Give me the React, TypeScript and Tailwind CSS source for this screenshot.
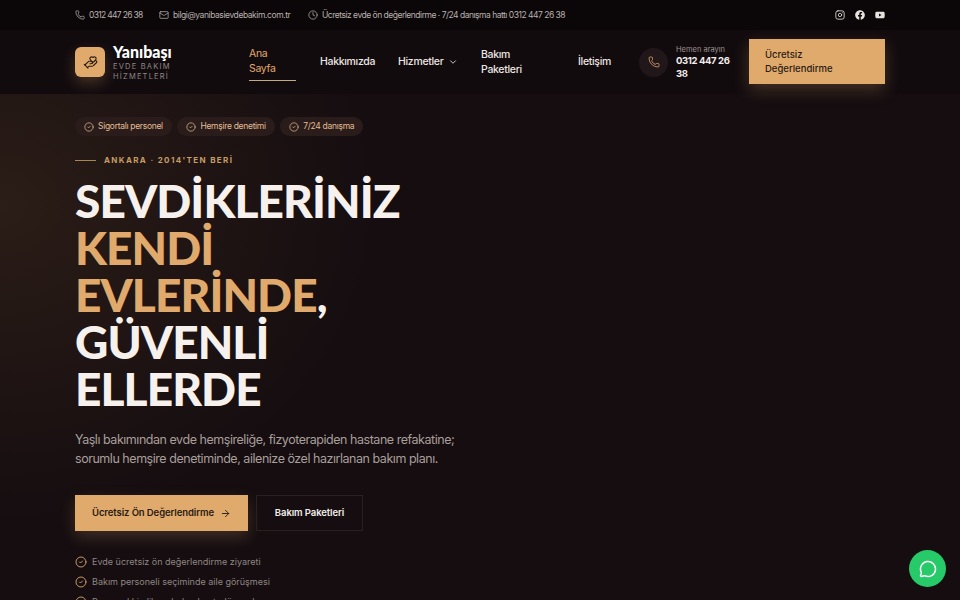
import { Phone, Mail, Clock, CircleCheck, ChevronDown, ArrowRight, MessageCircle, Instagram, HandHeart } from 'lucide-react'
import { FaFacebook, FaYoutube } from 'react-icons/fa'

const badges = ['Sigortalı personel', 'Hemşire denetimi', '7/24 danışma']
const checks = [
  'Evde ücretsiz ön değerlendirme ziyareti',
  'Bakım personeli seçiminde aile görüşmesi',
  'Personel kimlik ve belge kontrolü yapılır',
]

function TopBar() {
  return (
    <div className="h-[30px] bg-[#0b0709] px-[75px] flex items-center justify-between text-[8.5px] tracking-[-0.05em] text-[#b9b0ad]">
      <div className="flex items-center">
        <Phone size={10} className="mr-1" strokeWidth={1.75} />
        <span className="w-[54px] whitespace-nowrap tracking-[-0.08em]">0312 447 26 38</span>
        <Mail size={10} className="ml-4 mr-1" strokeWidth={1.75} />
        <span className="w-[119px] whitespace-nowrap">bilgi@yanibasievdebakim.com.tr</span>
        <Clock size={10} className="ml-4 mr-[4px]" strokeWidth={1.75} />
        <span className="whitespace-nowrap tracking-[-0.058em]">Ücretsiz evde ön değerlendirme · 7/24 danışma hattı 0312 447 26 38</span>
      </div>
      <div className="flex items-center gap-2.5 text-[#e8e2df]">
        <Instagram size={10} strokeWidth={2} />
        <FaFacebook size={10} />
        <FaYoutube size={10} />
      </div>
    </div>
  )
}

function Header() {
  return (
    <div className="h-[64px] bg-[#120b0e] px-[75px] flex items-center">
      <div className="w-[30px] h-[30px] rounded-md bg-[#e0aa6c] flex items-center justify-center shadow-[0_6px_14px_rgba(224,170,108,0.25)]">
        <HandHeart size={15} className="text-[#2a1a12]" strokeWidth={1.75} />
      </div>
      <div className="ml-2 w-[136px]">
        <div className="font-['Lato',sans-serif] font-black text-[16px] leading-[17px] text-white">Yanıbaşı</div>
        <div className="text-[7.5px] leading-[10px] tracking-[0.16em] text-[#8f8682] mt-0.5">
          EVDE BAKIM<br />HİZMETLERİ
        </div>
      </div>
      <nav className="flex items-center text-[10.5px] tracking-[-0.03em] font-medium text-[#ece6e3]">
        <div className="w-[47px] leading-[15px] text-[#e0aa6c] border-b-[1.5px] border-[#c0aa88] pb-1 pt-[2px] font-normal">Ana<br />Sayfa</div>
        <span className="ml-6 w-[54px] whitespace-nowrap">Hakkımızda</span>
        <span className="ml-6 flex items-center gap-[3px]">
          <span className="w-[47px] whitespace-nowrap">Hizmetler</span>
          <ChevronDown size={10} />
        </span>
        <span className="ml-[23px] w-[72px] leading-[15px]">Bakım<br />Paketleri</span>
        <span className="ml-[25px] w-[35px] whitespace-nowrap">İletişim</span>
      </nav>
      <div className="ml-[26px] w-[29px] h-[29px] rounded-full bg-[#21171a] flex items-center justify-center">
        <Phone size={12} className="text-[#e0aa6c]" strokeWidth={1.5} />
      </div>
      <div className="ml-2 w-[65px]">
        <div className="text-[7.5px] leading-[10px] text-[#9b918d]">Hemen arayın</div>
        <div className="text-[9.5px] leading-[13px] tracking-[-0.04em] font-bold text-[#f2edeb] -mt-px">0312 447 26 38</div>
      </div>
      <div className="ml-2 mb-px w-[136px] h-[45px] bg-[#e0aa6c] px-4 flex items-center text-[9.5px] leading-[13.5px] font-medium text-[#2a1a12] shadow-[0_6px_16px_rgba(224,170,108,0.25)]">
        Ücretsiz<br />Değerlendirme
      </div>
    </div>
  )
}

function Hero() {
  return (
    <div className="h-[506px] overflow-hidden pl-[75px] pt-[23px] bg-[radial-gradient(ellipse_380px_320px_at_0%_22%,#2b1d17_0%,#150d10_100%)]">
      <div className="flex gap-[5.5px]">
        {badges.map((b) => (
          <div key={b} className="h-[19px] rounded-full bg-[#2a1c1a] px-[9px] flex items-center gap-1 text-[8.5px] tracking-[-0.035em] text-[#e0bd92]">
            <CircleCheck size={10} strokeWidth={1.75} />
            {b}
          </div>
        ))}
      </div>
      <div className="mt-[18px] flex items-center gap-2 text-[8px] font-bold tracking-[0.17em] text-[#c79c66]">
        <div className="w-[21px] h-px bg-[#a98556]" />
        ANKARA · 2014'TEN BERİ
      </div>
      <h1 className="mt-[11px] font-['Lato',sans-serif] font-black text-[46px] leading-[47px] tracking-[-0.02em] text-[#f7f1ee]">
        SEVDİKLERİNİZ<br />
        <span className="text-[#e0aa6c]">KENDİ<br />EVLERİNDE</span>,<br />
        GÜVENLİ<br />ELLERDE
      </h1>
      <p className="mt-[18px] text-[12.5px] leading-[19px] tracking-[-0.037em] text-[#a89f9b]">
        Yaşlı bakımından evde hemşireliğe, fizyoterapiden hastane refakatine;<br />
        sorumlu hemşire denetiminde, ailenize özel hazırlanan bakım planı.
      </p>
      <div className="mt-[27px] flex gap-2">
        <div className="w-[173px] h-[36px] bg-[#e0aa6c] flex items-center justify-center gap-[6px] text-[9.5px] tracking-[-0.01em] font-semibold text-[#2a1a12] shadow-[0_6px_16px_rgba(224,170,108,0.22)]">
          Ücretsiz Ön Değerlendirme <ArrowRight size={11} />
        </div>
        <div className="w-[107px] h-[36px] border border-[#2a2022] flex items-center justify-center text-[9.5px] tracking-[-0.01em] font-semibold text-[#f2edeb]">
          Bakım Paketleri
        </div>
      </div>
      <div className="mt-6 flex flex-col gap-[6px]">
        {checks.map((c) => (
          <div key={c} className="h-[14px] flex items-center gap-[5px] text-[9px] text-[#8f8682]">
            <CircleCheck size={12} className="text-[#e0aa6c] shrink-0" strokeWidth={1.75} />
            {c}
          </div>
        ))}
      </div>
    </div>
  )
}

export default function App() {
  return (
    <div className="relative w-[960px] h-[600px] overflow-hidden bg-[#150d10] font-['Inter',sans-serif]">
      <TopBar />
      <Header />
      <Hero />
      <div className="absolute right-[14px] bottom-[13px] w-[37px] h-[37px] rounded-full bg-[#27ca68] flex items-center justify-center text-white">
        <MessageCircle size={18} strokeWidth={2} />
      </div>
    </div>
  )
}
